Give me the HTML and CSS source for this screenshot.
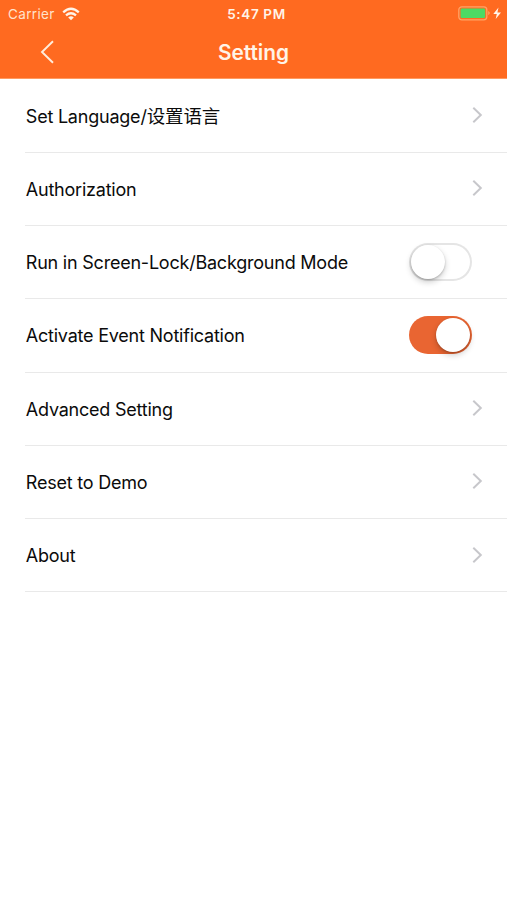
FILE: index.html
```html
<!DOCTYPE html>
<html lang="en">
<head>
<meta charset="utf-8">
<meta name="viewport" content="width=device-width, initial-scale=1">
<title>Setting</title>
<link rel="stylesheet" href="styles.css">
</head>
<body>
<header class="header">
  <div class="status">
    <div class="carrier"><span>Carrier</span>
      <svg class="wifi" width="18" height="14" viewBox="0 0 18 14" fill="none" stroke="#fff4e8" stroke-width="2.3"><path d="M1.2 5.3Q9-1.7 16.8 5.3M4 8.4Q9 4.1 14 8.4"/><path d="M6.2 10.5Q9 8.2 11.8 10.5L9 13.3Z" fill="#fff4e8" stroke="none"/></svg>
    </div>
    <div class="time">5:47 PM</div>
    <div class="power">
      <svg width="44" height="16" viewBox="0 0 44 16"><rect x=".8" y="1.8" width="28" height="13" rx="3" fill="none" stroke="#ffa365" stroke-width="1.3"/><rect x="2.6" y="3.5" width="24.6" height="9.6" rx="1.4" fill="#4cd964"/><path d="M30.3 6Q33.2 8 30.3 10.2Z" fill="#ffa96f"/><path d="M40.5 2.6L35.3 9H38.8L37.7 14L43 7.4H39.4Z" fill="#fff5ea"/></svg>
    </div>
  </div>
  <nav class="navbar">
    <svg class="back" width="15" height="24" viewBox="0 0 15 24"><path d="M13 1.3L2 12L13 22.7" fill="none" stroke="#ffeddc" stroke-width="1.9"/></svg>
    <h1 class="title">Setting</h1>
  </nav>
</header>
<main class="list">
  <div class="row"><span class="label language">Set Language/<span class="cjk" lang="zh-CN">设置语言</span></span><svg class="chevron" viewBox="0 0 11 18"><path d="M1.3 1.8L8.8 9L1.3 16.2"/></svg></div>
  <div class="row"><span class="label">Authorization</span><svg class="chevron" viewBox="0 0 11 18"><path d="M1.3 1.8L8.8 9L1.3 16.2"/></svg></div>
  <div class="row"><span class="label">Run in Screen-Lock/Background Mode</span><span class="switch"><span class="knob"></span></span></div>
  <div class="row"><span class="label">Activate Event Notification</span><span class="switch on"><span class="knob"></span></span></div>
  <div class="row"><span class="label">Advanced Setting</span><svg class="chevron" viewBox="0 0 11 18"><path d="M1.3 1.8L8.8 9L1.3 16.2"/></svg></div>
  <div class="row"><span class="label">Reset to Demo</span><svg class="chevron" viewBox="0 0 11 18"><path d="M1.3 1.8L8.8 9L1.3 16.2"/></svg></div>
  <div class="row"><span class="label">About</span><svg class="chevron" viewBox="0 0 11 18"><path d="M1.3 1.8L8.8 9L1.3 16.2"/></svg></div>
</main>
</body>
</html>
```
FILE: styles.css
```css
* { box-sizing: border-box; }
body {
  margin: 0;
  min-height: 900px;
  background: #fff;
  color: #0b0b0b;
  font-family: Inter, "Noto Sans CJK SC", sans-serif;
}
.header {
  height: 79px;
  background: #ff6a20;
  color: #fff4e8;
  border-bottom: 1px solid #ff9a60;
}
.status {
  display: grid;
  grid-template-columns: 1fr auto 1fr;
  align-items: center;
  height: 27px;
  padding: 0 5px 0 8px;
  font-size: 13.5px;
  line-height: 27px;
}
.carrier { display: flex; align-items: center; gap: 7px; letter-spacing: 0.35px; color: #ffe3cc; }
.carrier span, .time { padding-top: 1px; }
.wifi { display: block; margin-top: -1px; }
.time { font-weight: 600; letter-spacing: 0.65px; padding-left: 3px; }
.power { display: flex; justify-content: flex-end; }
.power svg { display: block; margin-top: -3px; }
.navbar {
  display: grid;
  grid-template-columns: 60px 1fr 60px;
  align-items: center;
  height: 51px;
}
.back { margin: -2px 0 0 40px; }
.title { margin: 0; text-align: center; font-size: 20.8px; line-height: 24px; font-weight: 600; }
.list { padding: 0.6px 0 0 25px; }
.row {
  display: flex;
  align-items: center;
  justify-content: space-between;
  height: 73.25px;
  padding-right: 24px;
  border-bottom: 1px solid #e9e9e9;
}
.label { padding: 1.8px 0 0 0.8px; font-size: 18px; line-height: 24px; white-space: nowrap; letter-spacing: -0.22px; }
.language { padding-top: 1px; }
.cjk { font-size: 18.5px; letter-spacing: -0.1px; }
.chevron { width: 11px; height: 18px; margin-top: -1px; fill: none; stroke: #c7c7cb; stroke-width: 2; }
.switch {
  display: flex;
  width: 63px;
  height: 38px;
  margin-right: 11px;
  padding: 2px;
  border-radius: 19px;
  background: #fff;
  box-shadow: inset 0 0 0 2px #e5e5e5;
}
.knob {
  width: 34px;
  height: 34px;
  border-radius: 50%;
  background: #fff;
  box-shadow: 0 3px 6px rgba(0, 0, 0, 0.2), 0 1px 2px rgba(0, 0, 0, 0.2);
}
.on { justify-content: flex-end; background: #e96532; box-shadow: none; }
```
